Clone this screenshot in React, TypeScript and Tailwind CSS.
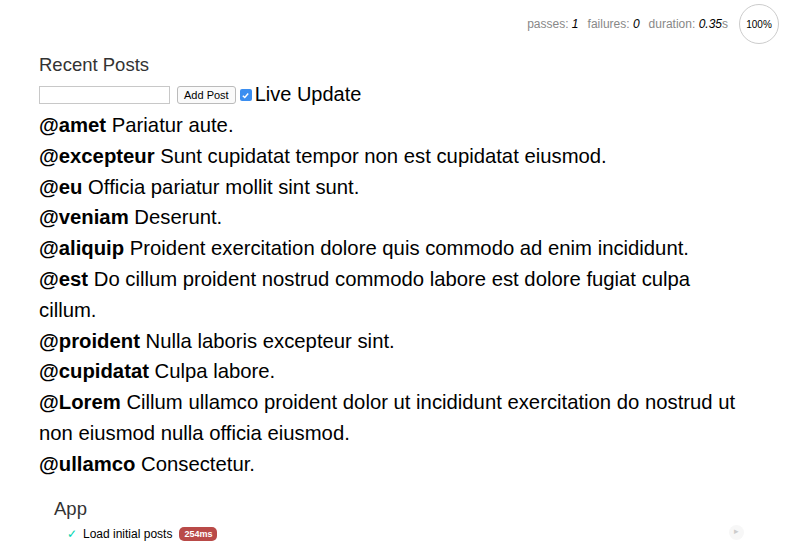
import React from 'react';

const posts: [string, string][] = [
  ['amet', 'Pariatur aute.'],
  ['excepteur', 'Sunt cupidatat tempor non est cupidatat eiusmod.'],
  ['eu', 'Officia pariatur mollit sint sunt.'],
  ['veniam', 'Deserunt.'],
  ['aliquip', 'Proident exercitation dolore quis commodo ad enim incididunt.'],
  ['est', 'Do cillum proident nostrud commodo labore est dolore fugiat culpa cillum.'],
  ['proident', 'Nulla laboris excepteur sint.'],
  ['cupidatat', 'Culpa labore.'],
  ['Lorem', 'Cillum ullamco proident dolor ut incididunt exercitation do nostrud ut non eiusmod nulla officia eiusmod.'],
  ['ullamco', 'Consectetur.'],
];

function Stats() {
  return (
    <ul className="absolute right-[12px] top-[4px] flex items-center gap-[9px] text-[12px] text-[#888]">
      <li>
        passes: <em className="text-black">1</em>
      </li>
      <li>
        failures: <em className="text-black">0</em>
      </li>
      <li>
        duration: <em className="text-black">0.35</em>s
      </li>
      <li className="ml-[2px] flex h-[40px] w-[40px] items-center justify-center rounded-full border border-[#ccc] text-[10px] text-black">
        100%
      </li>
    </ul>
  );
}

export default function App() {
  return (
    <div className="relative min-h-[554px] bg-white font-['Helvetica_Neue','Liberation_Sans',Arial,sans-serif] text-black">
      <Stats />
      <div className="w-[744px] pl-[39px] pt-[53px]">
        <h1 className="text-[18.5px] font-light leading-[24px] text-[#333]">Recent Posts</h1>
        <div className="mt-[9px] flex items-center">
          <input
            type="text"
            className="h-[18px] w-[131px] border border-[#c8c8c8] bg-white"
          />
          <button
            type="button"
            className="ml-[7px] h-[18px] rounded-[3px] border border-[#bbb] bg-[#fafafa] px-[6px] text-[11px] leading-[14px]"
          >
            Add Post
          </button>
          <span className="ml-[4px] flex h-[12px] w-[12px] items-center justify-center rounded-[2px] bg-[#3b8ef0]">
            <svg viewBox="0 0 10 10" className="h-[9px] w-[9px]">
              <path d="M2 5.2 L4.2 7.3 L8 2.8" fill="none" stroke="white" strokeWidth="1.6" />
            </svg>
          </span>
          <span className="ml-[3px] -mt-[3px] text-[20px] leading-[20px]">Live Update</span>
        </div>
        <ul className="mt-[6px] text-[20.3px] leading-[30.8px]">
          {posts.map(([user, text]) => (
            <li key={user}>
              <strong className="font-bold">@{user}</strong> {text}
            </li>
          ))}
        </ul>
      </div>
      <div className="mt-[17px] pl-[54px] pr-[47px]">
        <h1 className="text-[18.5px] font-light leading-[24px] text-[#333]">App</h1>
        <div className="relative mt-[4px] flex items-center pl-[13px] text-[12px]">
          <span className="mr-[6px] text-[#00d6b2]">✓</span>
          <span>Load initial posts</span>
          <span className="ml-[7px] rounded-[5px] bg-[#b94a48] px-[5px] py-[1px] text-[9px] font-bold leading-[12px] text-white">
            254ms
          </span>
          <span className="absolute right-0 top-[0px] flex h-[15px] w-[15px] items-center justify-center rounded-full bg-[#f7f7f7] text-[9px] text-[#ccc]">
            ▸
          </span>
        </div>
      </div>
    </div>
  );
}
